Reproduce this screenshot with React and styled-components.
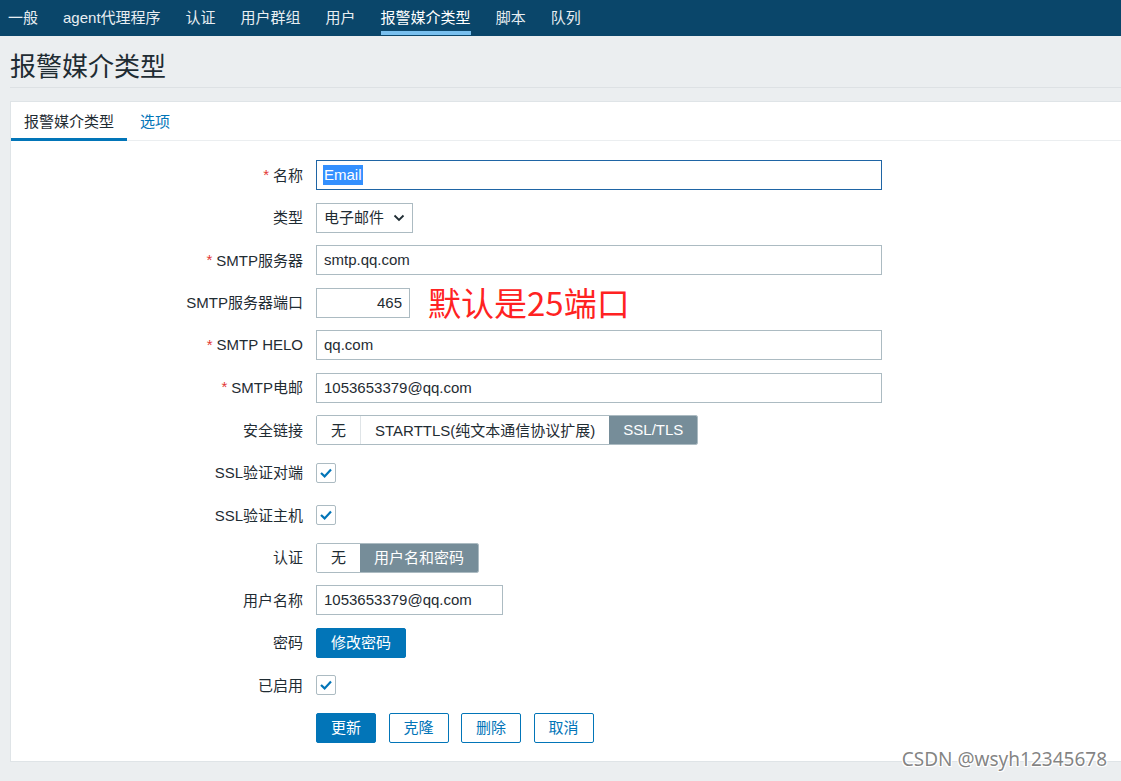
import React from 'react';
import styled, { createGlobalStyle } from 'styled-components';

const FONT = `"Liberation Sans", Arial, "Noto Sans CJK SC", sans-serif`;

const GlobalStyle = createGlobalStyle`
  html, body {
    margin: 0;
    padding: 0;
    background: #ebeef0;
    overflow: hidden;
  }
  body {
    font-family: ${FONT};
    font-size: 15px;
    color: #1f2c33;
  }
  * { box-sizing: border-box; }
`;

// Top navigation
const TopNav = styled.nav`
  height: 36px;
  background: #0a466a;
  display: flex;
  gap: 25px;
  padding-left: 8px;
`;

const NavItem = styled.a`
  position: relative;
  display: flex;
  align-items: center;
  padding-bottom: 4px;
  color: ${p => (p.$active ? '#ffffff' : '#e8eef2')};
  text-decoration: none;
  font-size: 15px;
  white-space: nowrap;

  &::after {
    content: '';
    display: ${p => (p.$active ? 'block' : 'none')};
    position: absolute;
    left: 0;
    right: 0;
    bottom: 1px;
    height: 4px;
    background: #78bfee;
  }
`;

// Page header
const PageHeader = styled.header`
  height: 52px;
  margin-left: 10px;
  padding-top: 5px;
  display: flex;
  align-items: center;
  border-bottom: 1px solid #dde1e4;
`;

const Title = styled.h1`
  margin: 0;
  font-size: 26px;
  font-weight: normal;
  color: #1f2c33;
`;

// Main card
const Card = styled.section`
  margin: 13px 0 0 10px;
  background: #ffffff;
  border: 1px solid #dfe4e7;
  border-right: none;
  padding-bottom: 18px;
`;

const Tabs = styled.div`
  display: flex;
  height: 39px;
  border-bottom: 1px solid #ebeef0;
`;

const Tab = styled.a`
  position: relative;
  display: flex;
  align-items: center;
  padding: 0 13px 2px;
  font-size: 15px;
  text-decoration: none;
  color: ${p => (p.$active ? '#1f2c33' : '#0275b8')};

  &::after {
    content: '';
    display: ${p => (p.$active ? 'block' : 'none')};
    position: absolute;
    left: 0;
    right: 0;
    bottom: -1px;
    height: 3px;
    background: #0275b8;
  }
`;

const Form = styled.form`
  display: grid;
  grid-template-columns: 292px 1fr;
  column-gap: 13px;
  row-gap: 12.54px;
  padding-top: 19px;
`;

const Label = styled.label`
  height: 30px;
  display: flex;
  align-items: center;
  justify-content: flex-end;
  padding-bottom: 2px;
  white-space: nowrap;
  color: #1f2c33;
`;

const Asterisk = styled.span`
  color: #e33734;
  margin-right: 4px;
`;

const Field = styled.div`
  height: 30px;
  display: flex;
  align-items: center;
`;

const TextInput = styled.input`
  width: ${p => p.$w}px;
  height: 30px;
  padding: 0 7px 1px;
  border: 1px solid #acbbc2;
  border-radius: 0;
  background: #ffffff;
  font-family: ${FONT};
  font-size: 15px;
  color: #1f2c33;
  text-align: ${p => (p.$right ? 'right' : 'left')};
  outline: none;
`;

const FocusedInput = styled.div`
  width: ${p => p.$w}px;
  height: 30px;
  padding: 0 6px 1px;
  border: 1px solid #1f65a5;
  display: flex;
  align-items: center;
  background: #ffffff;
`;

const Selected = styled.span`
  background: #3390ff;
  color: #ffffff;
  line-height: 20px;
  padding: 0 1px;
`;

const Select = styled.div`
  width: 97px;
  height: 30px;
  padding: 0 7px 2px;
  border: 1px solid #acbbc2;
  display: flex;
  align-items: center;
  justify-content: space-between;
  color: #1f2c33;

  svg { margin-top: 2px; }
`;

const Annotation = styled.span`
  margin-left: 18px;
  margin-bottom: 2px;
  font-family: "Noto Sans CJK SC", "Liberation Sans", sans-serif;
  font-size: 33px;
  line-height: 30px;
  color: #ff2222;
`;

const Segmented = styled.div`
  display: inline-flex;
  height: 30px;
  border: 1px solid #acbbc2;
  border-radius: 2px;
  overflow: hidden;
`;

const Segment = styled.span`
  display: flex;
  align-items: center;
  padding: 0 14px 2px;
  white-space: nowrap;
  background: ${p => (p.$active ? '#768d99' : '#ffffff')};
  color: ${p => (p.$active ? '#ffffff' : '#1f2c33')};
  border-left: ${p => (p.$first || p.$active ? 'none' : '1px solid #dfe4e7')};
`;

const CheckBox = styled.span`
  width: 20px;
  height: 20px;
  border: 1px solid #acbbc2;
  border-radius: 2px;
  display: flex;
  align-items: center;
  justify-content: center;
  background: #ffffff;
`;

const Button = styled.button`
  height: 30px;
  width: ${p => p.$w || 60}px;
  padding: 0 0 2px;
  border-radius: 2px;
  border: 1px solid #0275b8;
  background: ${p => (p.$outline ? '#ffffff' : '#0275b8')};
  color: ${p => (p.$outline ? '#0275b8' : '#ffffff')};
  font-family: ${FONT};
  font-size: 15px;
  cursor: pointer;
`;

const ButtonRow = styled.div`
  display: flex;
  gap: 12.5px;
`;

const Watermark = styled.div`
  position: absolute;
  right: 14px;
  bottom: 9px;
  font-family: "Noto Sans", "DejaVu Sans", sans-serif;
  font-size: 19px;
  color: rgba(110, 110, 110, 0.85);
  text-shadow: 1px 1px 0 #fff, -1px -1px 0 #fff, 1px -1px 0 #fff, -1px 1px 0 #fff;
  pointer-events: none;
`;

const Page = styled.div`
  position: relative;
  height: 781px;
`;

const Check = () => (
  <svg width="14" height="12" viewBox="0 0 14 12">
    <path d="M2 6 L5.6 9.4 L12 2.6" fill="none" stroke="#0275b8" strokeWidth="2.2" />
  </svg>
);

const Chevron = () => (
  <svg width="12" height="8" viewBox="0 0 12 8">
    <path d="M1.5 1.5 L6 6 L10.5 1.5" fill="none" stroke="#1f2c33" strokeWidth="1.8" />
  </svg>
);

const navItems = ['一般', 'agent代理程序', '认证', '用户群组', '用户', '报警媒介类型', '脚本', '队列'];

const Req = ({ children }) => (
  <Label>
    <Asterisk>*</Asterisk>
    {children}
  </Label>
);

const App = () => {
  return (
    <Page>
      <GlobalStyle />
      <TopNav>
        {navItems.map(item => (
          <NavItem key={item} href="#" $active={item === '报警媒介类型'}>
            {item}
          </NavItem>
        ))}
      </TopNav>

      <PageHeader>
        <Title>报警媒介类型</Title>
      </PageHeader>

      <Card>
        <Tabs>
          <Tab href="#" $active>报警媒介类型</Tab>
          <Tab href="#">选项</Tab>
        </Tabs>

        <Form onSubmit={e => e.preventDefault()}>
          <Req>名称</Req>
          <Field>
            <FocusedInput $w={566}>
              <Selected>Email</Selected>
            </FocusedInput>
          </Field>

          <Label>类型</Label>
          <Field>
            <Select>
              电子邮件
              <Chevron />
            </Select>
          </Field>

          <Req>SMTP服务器</Req>
          <Field>
            <TextInput $w={566} defaultValue="smtp.qq.com" />
          </Field>

          <Label>SMTP服务器端口</Label>
          <Field>
            <TextInput $w={94} $right defaultValue="465" />
            <Annotation>默认是25端口</Annotation>
          </Field>

          <Req>SMTP HELO</Req>
          <Field>
            <TextInput $w={566} defaultValue="qq.com" />
          </Field>

          <Req>SMTP电邮</Req>
          <Field>
            <TextInput $w={566} defaultValue="1053653379@qq.com" />
          </Field>

          <Label>安全链接</Label>
          <Field>
            <Segmented>
              <Segment $first>无</Segment>
              <Segment>STARTTLS(纯文本通信协议扩展)</Segment>
              <Segment $active>SSL/TLS</Segment>
            </Segmented>
          </Field>

          <Label>SSL验证对端</Label>
          <Field>
            <CheckBox><Check /></CheckBox>
          </Field>

          <Label>SSL验证主机</Label>
          <Field>
            <CheckBox><Check /></CheckBox>
          </Field>

          <Label>认证</Label>
          <Field>
            <Segmented>
              <Segment $first>无</Segment>
              <Segment $active>用户名和密码</Segment>
            </Segmented>
          </Field>

          <Label>用户名称</Label>
          <Field>
            <TextInput $w={187} defaultValue="1053653379@qq.com" />
          </Field>

          <Label>密码</Label>
          <Field>
            <Button type="button" $w={90}>修改密码</Button>
          </Field>

          <Label>已启用</Label>
          <Field>
            <CheckBox><Check /></CheckBox>
          </Field>

          <span />
          <ButtonRow>
            <Button type="submit">更新</Button>
            <Button type="button" $outline>克隆</Button>
            <Button type="button" $outline>删除</Button>
            <Button type="button" $outline>取消</Button>
          </ButtonRow>
        </Form>
      </Card>

      <Watermark>CSDN @wsyh12345678</Watermark>
    </Page>
  );
};

export default App;
